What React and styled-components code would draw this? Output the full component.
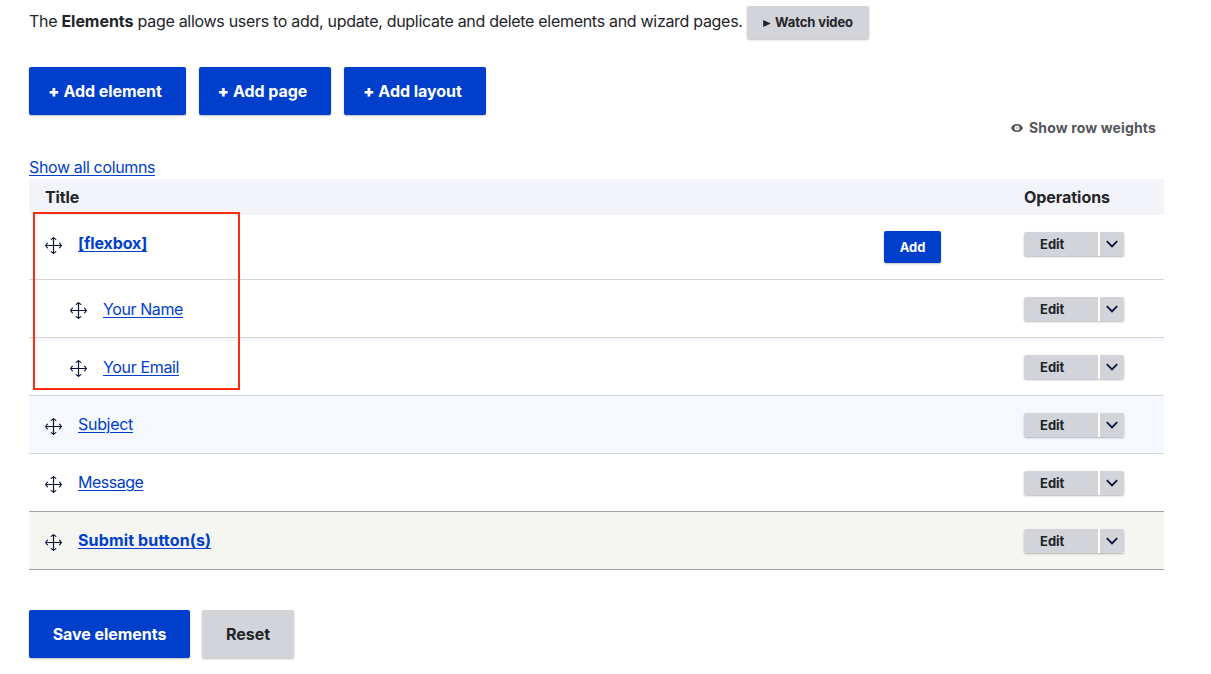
import React from 'react';
import styled, { createGlobalStyle, css } from 'styled-components';

const Global = createGlobalStyle`
  *, *::before, *::after { box-sizing: border-box; }
  body {
    margin: 0;
    background: #fff;
    color: #232429;
    font: 16px/24px Inter, "Liberation Sans", sans-serif;
    overflow: hidden;
  }
`;

const Page = styled.main`
  padding: 6px 47px 16px 29px;
  height: 674px;
  overflow: hidden;
`;

const Text = styled.span`
  letter-spacing: ${(p) => p.$track || 0}px;
  white-space: pre;
`;

const Intro = styled.div`
  display: flex;
  gap: 5px;
  height: 34px;
`;

const IntroText = styled.p`
  margin: 3px 0 0;
  width: 713px;
  white-space: nowrap;

  b {
    letter-spacing: -0.05px;
  }
`;

const Button = styled.button`
  display: inline-flex;
  align-items: center;
  justify-content: center;
  width: ${(p) => p.$width}px;
  height: 48px;
  padding: 0;
  border: 0;
  border-radius: 2px;
  font: 700 16px/16px Inter, "Liberation Sans", sans-serif;
  color: #fff;
  background: #003ecc;
  box-shadow: 0 1px 2px rgba(0, 0, 0, 0.25);
  ${(p) => p.$gray && css`
    color: #232429;
    background: #d3d4d9;
  `}
  ${(p) => p.$small && css`
    height: ${p.$small}px;
    font-size: 13px;
  `}
  ${(p) => p.$video && css`
    padding-bottom: 1px;
  `}
  ${(p) => p.$plus && css`
    padding-right: 5px;
    &::before {
      content: '+';
      margin-right: 4px;
      font-weight: 900;
    }
  `}
`;

const Triangle = styled.svg`
  margin: 2px 4px 0 0;
  fill: currentColor;
`;

const Actions = styled.div`
  display: flex;
  gap: ${(p) => p.$gap}px;
  margin-top: ${(p) => p.$top}px;
`;

const Weights = styled.div`
  display: flex;
  align-items: center;
  justify-content: flex-end;
  gap: 6px;
  height: 26px;
  padding-right: 8px;
  font-size: 14px;
  font-weight: 700;
  color: #55565b;
`;

const Columns = styled.div`
  height: 24px;
  margin: 14px 0 0;
`;

const Link = styled.a`
  color: #003ecc;
  font-weight: ${(p) => (p.$bold ? 700 : 400)};
  text-decoration: underline;
  text-decoration-thickness: 1px;
  text-underline-offset: 2px;
  letter-spacing: ${(p) => p.$track || 0}px;
  white-space: nowrap;
`;

const Table = styled.section`
  position: relative;
`;

const Head = styled.div`
  display: grid;
  grid-template-columns: 979px 1fr;
  align-items: center;
  height: 36px;
  padding-left: 16px;
  background: #f3f4f9;
  font-weight: 700;
`;

const tones = {
  plain: '#fff',
  striped: 'linear-gradient(#f5f8ff 3px, #fff 3px)',
  blue: '#f5f8ff',
  gray: '#f5f5f2',
};

const Row = styled.div`
  display: grid;
  grid-template-columns: 855px 140px 1fr;
  height: ${(p) => p.$height}px;
  border-bottom: 1px solid ${(p) => (p.$dark ? '#a2a3a3' : '#d3d4d9')};
  background: ${(p) => tones[p.$tone]};
`;

const TitleCell = styled.div`
  display: flex;
  gap: 16px;
  padding: ${(p) => (p.$child ? '17px 0 0 41px' : '16px 0 0 16px')};
`;

const Handle = styled.svg`
  flex: none;
  margin-top: ${(p) => p.$top}px;
`;

const AddCell = styled.div`
  padding-top: 16px;
`;

const OpsCell = styled.div`
  padding-top: 17px;
`;

const Split = styled.div`
  display: flex;
  gap: 2px;
  width: 100px;
  height: 24px;
  border-radius: 2px;
  background: #fff;
  box-shadow: 0 1px 2px rgba(0, 0, 0, 0.28);
`;

const Edit = styled.button`
  width: 74px;
  padding: 0 0 0 16px;
  border: 0;
  border-radius: 2px 0 0 2px;
  background: #d3d4d9;
  color: #232429;
  font: 700 13px/24px Inter, "Liberation Sans", sans-serif;
  text-align: left;
`;

const Toggle = styled.button`
  display: flex;
  align-items: center;
  justify-content: center;
  width: 24px;
  padding: 0;
  border: 0;
  border-radius: 0 2px 2px 0;
  background: #d3d4d9;
`;

const Highlight = styled.div`
  position: absolute;
  top: 33px;
  left: 4px;
  width: 207px;
  height: 178px;
  border: 2px solid #fb2b0b;
  pointer-events: none;
`;

const MoveIcon = ({ top }) => (
  <Handle $top={top} width="17" height="17" viewBox="0 0 17 17" fill="none" stroke="#0a1637" strokeWidth="1.2" strokeLinecap="round" strokeLinejoin="round">
    <path d="M8.5 .6v15.8M.6 8.5h15.8M6.2 2.4 8.5.6l2.3 1.8M6.2 14.6l2.3 1.8 2.3-1.8M2.4 6.2.6 8.5l1.8 2.3M14.6 6.2l1.8 2.3-1.8 2.3" />
  </Handle>
);

const EyeIcon = () => (
  <svg width="12" height="8" viewBox="0 0 12 8">
    <path fill="#55565b" fillRule="evenodd" d="M6 0C3.2 0 1 1.6 0 4c1 2.4 3.2 4 6 4s5-1.6 6-4c-1-2.4-3.2-4-6-4Zm0 1.5a2.5 2.5 0 1 1 0 5 2.5 2.5 0 0 1 0-5Z" />
    <circle cx="6" cy="4" r="1.2" fill="#c5c5c8" />
  </svg>
);

const rows = [
  { title: '[flexbox]', bold: true, add: true, height: 65, tone: 'plain', track: -0.1 },
  { title: 'Your Name', child: true, tone: 'plain', track: -0.4 },
  { title: 'Your Email', child: true, tone: 'striped', track: -0.35 },
  { title: 'Subject', tone: 'blue', track: -0.3 },
  { title: 'Message', dark: true, tone: 'plain', track: -0.5 },
  { title: 'Submit button(s)', bold: true, dark: true, tone: 'gray', track: 0.14 },
];

export default function App() {
  return (
    <Page>
      <Global />
      <Intro>
        <IntroText>
          <Text $track={-0.3}>The <b>Elements</b> page allows users to add, update, duplicate and delete elements and wizard pages.</Text>
        </IntroText>
        <Button $gray $video $small={33} $width={122}>
          <Triangle width="8" height="7" viewBox="0 0 8 7"><path d="M.2 0 7.8 3.5.2 7z" /></Triangle>
          <Text $track={-0.1}>Watch video</Text>
        </Button>
      </Intro>
      <Actions $gap={13} $top={27}>
        <Button $plus $width={157}><Text $track={-0.05}>Add element</Text></Button>
        <Button $plus $width={132}><Text $track={-0.05}>Add page</Text></Button>
        <Button $plus $width={142}><Text $track={-0.05}>Add layout</Text></Button>
      </Actions>
      <Weights><EyeIcon /><Text $track={0.14}>Show row weights</Text></Weights>
      <Columns><Link $track={-0.36}>Show all columns</Link></Columns>
      <Table>
        <Head><Text $track={-0.1}>Title</Text><Text $track={-0.05}>Operations</Text></Head>
        {rows.map((r) => (
          <Row key={r.title} $height={r.height || 58} $tone={r.tone} $dark={r.dark}>
            <TitleCell $child={r.child}>
              <MoveIcon top={r.child ? 5 : 6} />
              <Link $bold={r.bold} $track={r.track}>{r.title}</Link>
            </TitleCell>
            <AddCell>
              {r.add && <Button $small={32} $width={57}><Text $track={-0.1}>Add</Text></Button>}
            </AddCell>
            <OpsCell>
              <Split>
                <Edit>Edit</Edit>
                <Toggle aria-label="More">
                  <svg width="12" height="8" viewBox="0 0 12 8" fill="none" stroke="#0a1637" strokeWidth="1.8"><path d="M.8 1.2 6 6.4l5.2-5.2" /></svg>
                </Toggle>
              </Split>
            </OpsCell>
          </Row>
        ))}
        <Highlight />
      </Table>
      <Actions $gap={12} $top={40}>
        <Button $width={161}><Text $track={-0.05}>Save elements</Text></Button>
        <Button $gray $width={92}><Text $track={-0.05}>Reset</Text></Button>
      </Actions>
    </Page>
  );
}
